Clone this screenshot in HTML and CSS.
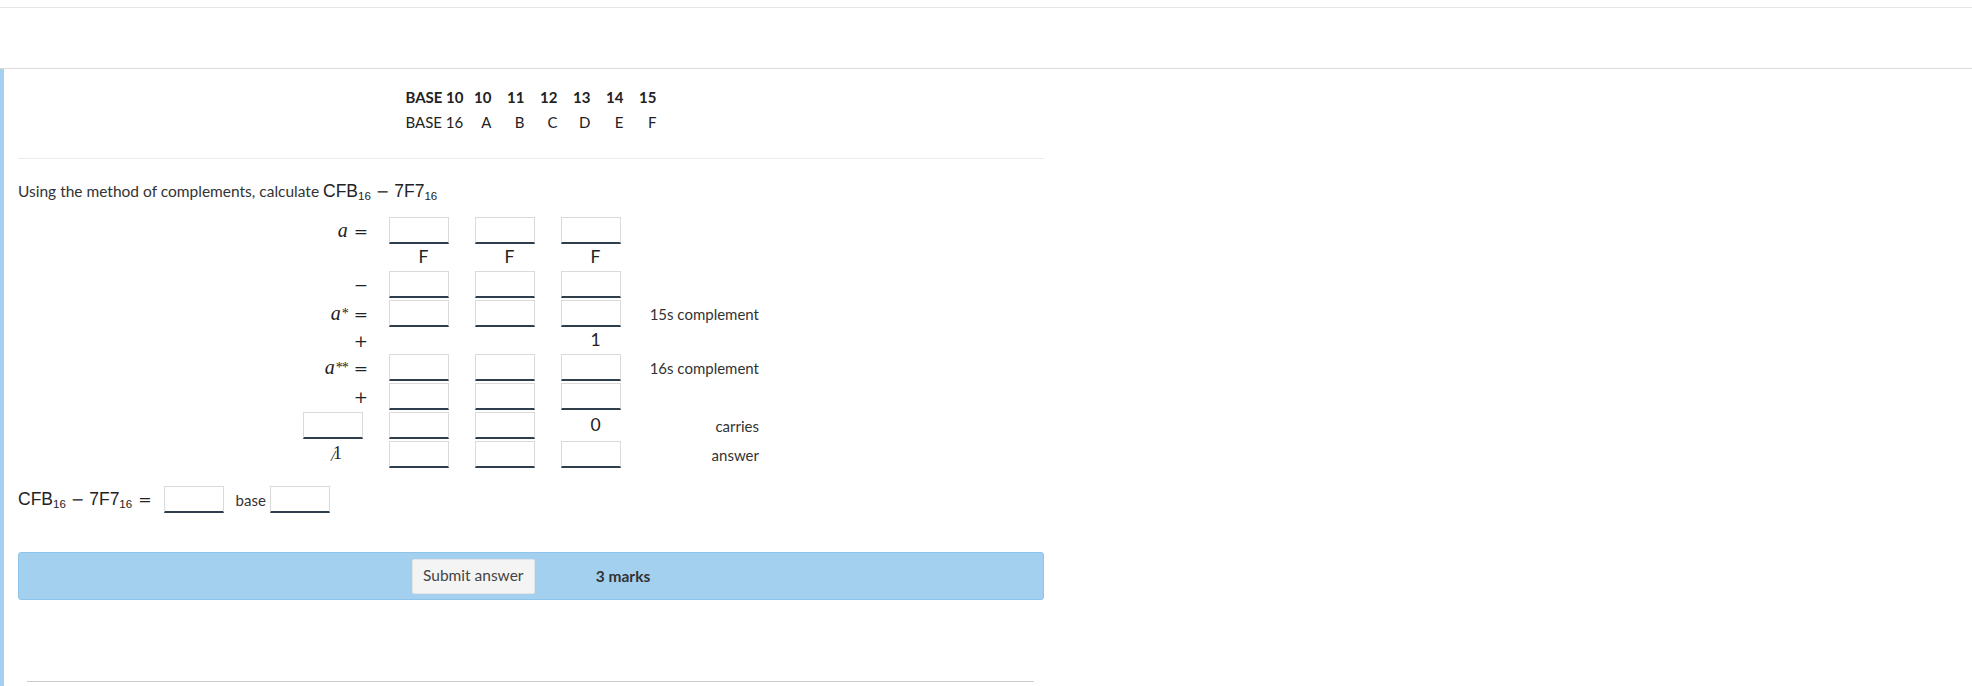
FILE: index.html
```html
<!DOCTYPE html>
<html>
<head>
<meta charset="utf-8">
<title>Method of complements</title>
<link rel="stylesheet" href="styles.css">
</head>
<body>
<div class="topbar"></div>
<div class="navbar"></div>
<main class="main">
  <div class="content">
    <div class="basetable">
      <span class="b">BASE 10</span><span class="b">10</span><span class="b">11</span><span class="b">12</span><span class="b">13</span><span class="b">14</span><span class="b">15</span>
      <span>BASE 16</span><span>A</span><span>B</span><span>C</span><span>D</span><span>E</span><span>F</span>
    </div>
    <div class="rule"></div>
    <p class="prompt">Using the method of complements, calculate <span class="mexpr">CFB<sub>16</sub><span class="mo">−</span>7F7<sub>16</sub></span></p>

    <div class="work">
      <!-- row 1 -->
      <div class="lbl"><span class="mi">a</span><span class="eq">=</span></div>
      <input class="box" type="text"><input class="box" type="text"><input class="box" type="text">
      <div class="note"></div>
      <!-- row 2 -->
      <div></div>
      <div class="txt">F</div><div class="txt">F</div><div class="txt">F</div>
      <div class="note"></div>
      <!-- row 3 -->
      <div class="lbl"><span class="op">−</span></div>
      <input class="box" type="text"><input class="box" type="text"><input class="box" type="text">
      <div class="note"></div>
      <!-- row 4 -->
      <div class="lbl"><span class="mi">a</span><sup class="star">*</sup><span class="eq">=</span></div>
      <input class="box" type="text"><input class="box" type="text"><input class="box" type="text">
      <div class="note">15s complement</div>
      <!-- row 5 -->
      <div class="lbl"><span class="op">+</span></div>
      <div></div><div></div><div class="txt">1</div>
      <div class="note"></div>
      <!-- row 6 -->
      <div class="lbl"><span class="mi">a</span><sup class="star">**</sup><span class="eq">=</span></div>
      <input class="box" type="text"><input class="box" type="text"><input class="box" type="text">
      <div class="note">16s complement</div>
      <!-- row 7 -->
      <div class="lbl"><span class="op">+</span></div>
      <input class="box" type="text"><input class="box" type="text"><input class="box" type="text">
      <div class="note"></div>
      <!-- row 8 -->
      <input class="box" type="text">
      <input class="box" type="text"><input class="box" type="text"><div class="txt">0</div>
      <div class="note">carries</div>
      <!-- row 9 -->
      <div class="txt"><span class="struck">1</span></div>
      <input class="box" type="text"><input class="box" type="text"><input class="box" type="text">
      <div class="note">answer</div>
    </div>

    <div class="final">
      <span class="mexpr">CFB<sub>16</sub><span class="mo">−</span>7F7<sub>16</sub><span class="mo eqm">=</span></span>
      <input class="box" type="text">
      <span class="baselbl">base</span>
      <input class="box" type="text">
    </div>

    <div class="panel">
      <button class="submit" type="button">Submit answer</button>
      <span class="marks">3 marks</span>
    </div>

    <div class="endrule"></div>
  </div>
</main>
</body>
</html>
```

FILE: styles.css
```css
html, body {
  margin: 0;
  padding: 0;
  background: #ffffff;
}

body {
  font-family: Lato, "Source Sans Pro", "Noto Sans", sans-serif;
  font-size: 15px;
  color: #333333;
  overflow: hidden;
}

.topbar {
  height: 7px;
  border-bottom: 1px solid #e6e6e6;
}

.navbar {
  height: 60px;
  border-bottom: 1px solid #dcdcdc;
}

.main {
  border-left: 4px solid #a3d0ef;
  padding-left: 14px;
  min-height: calc(100vh - 69px);
  box-sizing: border-box;
}

.content {
  width: 1026px;
}

/* base conversion table */
.basetable {
  display: grid;
  grid-template-columns: 53px repeat(6, 33px);
  grid-auto-rows: 25px;
  justify-content: center;
  padding-top: 16px;
  color: #222;
}

.basetable span {
  text-align: right;
  line-height: 25px;
  white-space: nowrap;
}

.basetable .b {
  font-weight: 700;
}

.rule {
  margin-top: 23px;
  border-top: 1px solid #ececec;
}

.prompt {
  margin: 20px 0 0;
  line-height: 24px;
  font-size: 15.5px;
}

/* math */
.mexpr {
  font-family: "Liberation Sans", Arial, sans-serif;
  font-size: 17.5px;
  color: #222;
  white-space: nowrap;
}

.mexpr sub {
  font-size: 11.5px;
  vertical-align: -3px;
  line-height: 0;
}

.mo {
  font-family: "DejaVu Serif", "Liberation Serif", serif;
  font-size: 16px;
  margin: 0 5px;
}

.eqm {
  margin: 0 0 0 6px;
}

.mi {
  font-family: "Liberation Serif", "DejaVu Serif", serif;
  font-style: italic;
  font-size: 20px;
}

.star {
  font-family: "Liberation Serif", serif;
  font-size: 14px;
  vertical-align: 7px;
  line-height: 0;
  margin-left: 1px;
  letter-spacing: -1px;
}

.eq, .op {
  font-family: "DejaVu Serif", "Liberation Serif", serif;
  font-size: 17px;
}

.eq {
  margin-left: 6px;
}

/* working grid */
.work {
  display: grid;
  grid-template-columns: 60px 60px 60px 60px 112px;
  grid-template-rows: 29px 25px 29px 29px 25px 29px 29px 29px 29px;
  column-gap: 26px;
  justify-content: center;
  margin-top: 12px;
  color: #222;
}

.box {
  width: 60px;
  height: 27px;
  box-sizing: border-box;
  margin: 0;
  padding: 0 4px;
  border: 1px solid #dadada;
  border-bottom: 2px solid #2f3e4d;
  border-radius: 0;
  background: #fff;
  align-self: center;
  font: inherit;
}

.lbl {
  display: flex;
  justify-content: flex-end;
  align-items: center;
  margin-right: -5px;
  white-space: nowrap;
}

.txt {
  display: flex;
  justify-content: center;
  align-items: center;
  padding-left: 9px;
  padding-bottom: 2px;
  font-size: 17.5px;
}

.note {
  display: flex;
  justify-content: flex-end;
  align-items: center;
  white-space: nowrap;
  color: #333;
}

.struck {
  position: relative;
  font-family: "Liberation Serif", serif;
  font-size: 18px;
}

.struck::after {
  content: "/";
  position: absolute;
  left: -2px;
  top: 5px;
  font-size: 15px;
  font-style: italic;
}

/* final answer line */
.final {
  display: flex;
  align-items: center;
  height: 27px;
  margin-top: 17px;
}

.final .mexpr {
  margin-right: 12px;
}

.baselbl {
  margin: 0 4px 0 12px;
}

/* submit panel */
.panel {
  margin-top: 39px;
  height: 48px;
  box-sizing: border-box;
  background: #a3d0ef;
  border: 1px solid #8ec4e9;
  border-radius: 3px;
  display: flex;
  justify-content: center;
  align-items: center;
  gap: 61px;
}

.submit {
  width: 123px;
  height: 35px;
  background: #f4f4f4;
  border: 1px solid #e4e4e4;
  border-radius: 2px;
  color: #444;
  font-family: inherit;
  font-size: 15.5px;
  padding: 0 0 2px;
}

.marks {
  font-weight: 700;
  color: #333;
  font-size: 15.5px;
}

.endrule {
  margin: 81px 10px 0 9px;
  border-top: 1px solid #cccccc;
}
```
